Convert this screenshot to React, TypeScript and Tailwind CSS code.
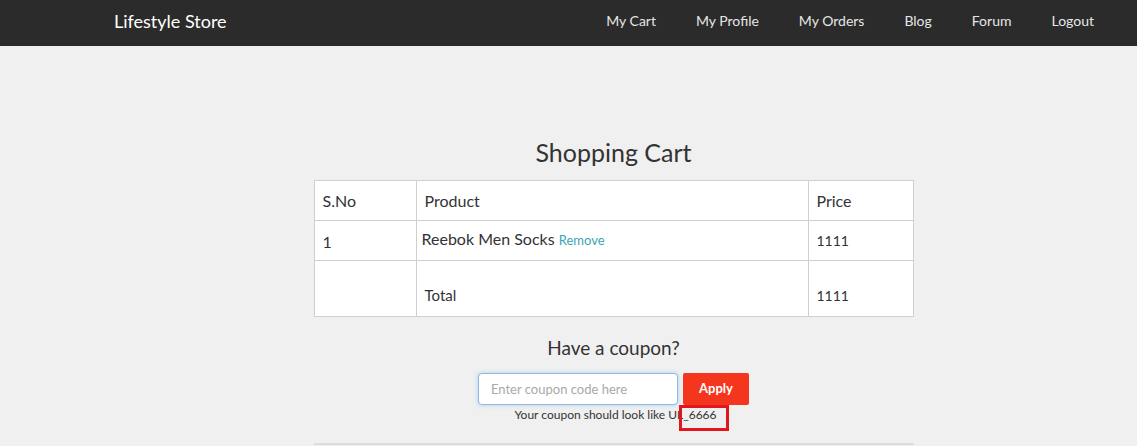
import React from "react";

export default function App() {
  const font = { fontFamily: "Lato, 'Open Sans', sans-serif" };
  return (
    <div className="min-h-[446px] bg-[#f0f0f0] text-[#333]" style={font}>
      <nav className="h-[46px] bg-[#2b2b2b] flex items-center justify-between pl-[114px] pr-[43px] pb-[5px]">
        <div className="text-white text-[18px] leading-none">Lifestyle Store</div>
        <div className="flex items-center text-[#e6e6e6] text-[14px] gap-[40px]">
          <span>My Cart</span>
          <span>My Profile</span>
          <span>My Orders</span>
          <span>Blog</span>
          <span>Forum</span>
          <span>Logout</span>
        </div>
      </nav>
      <div className="flex flex-col items-center pt-[91px] pl-[90px]">
        <h1 className="text-[25px] leading-[30px] text-[#333] mb-[13px]">Shopping Cart</h1>
        <table className="w-[600px] bg-white border-collapse text-[16px]">
          <tbody>
            <tr className="h-[40px]">
              <td className="w-[102px] border border-[#cfcfcf] px-[8px]">S.No</td>
              <td className="w-[392px] border border-[#cfcfcf] px-[8px]">Product</td>
              <td className="border border-[#cfcfcf] px-[8px]">Price</td>
            </tr>
            <tr className="h-[40px]">
              <td className="border border-[#cfcfcf] px-[8px] pt-[2px]">1</td>
              <td className="border border-[#cfcfcf] pl-[5px] pb-[4px]">
                Reebok Men Socks <span className="text-[#3aa5b5] text-[13px]">Remove</span>
              </td>
              <td className="border border-[#cfcfcf] px-[8px] text-[14px] text-[#333]">1111</td>
            </tr>
            <tr className="h-[56px]">
              <td className="border border-[#cfcfcf] px-[8px]"></td>
              <td className="border border-[#cfcfcf] px-[8px] align-bottom pb-[10px] text-[15px]">Total</td>
              <td className="border border-[#cfcfcf] px-[8px] align-bottom pb-[10px] text-[14px] text-[#333]">1111</td>
            </tr>
          </tbody>
        </table>
        <h2 className="text-[19px] leading-[24px] mt-[19px] text-[#333]">Have a coupon?</h2>
        <div className="flex items-center gap-[5px] mt-[13px]">
          <input
            placeholder="Enter coupon code here"
            className="w-[200px] h-[32px] rounded-[4px] border border-[#8fb9e0] bg-white px-[12px] text-[13px] placeholder-[#a9a9a9] shadow-[0_0_4px_rgba(102,175,233,0.5)] outline-none"
          />
          <button className="w-[66px] h-[32px] rounded-[2px] bg-[#f4361e] text-white text-[13px] font-bold">Apply</button>
        </div>
        <div className="relative mt-[1px] text-[12px] leading-[18px] text-[#333] ml-[4px]">
          Your coupon should look like UL_6666
          <div className="absolute left-[165px] top-[-1px] w-[50px] h-[26px] border-[3px] border-[#e1161f]"></div>
        </div>
        <div className="w-[600px] h-[2px] bg-[#dcdcdc] mt-[19px]"></div>
      </div>
    </div>
  );
}
